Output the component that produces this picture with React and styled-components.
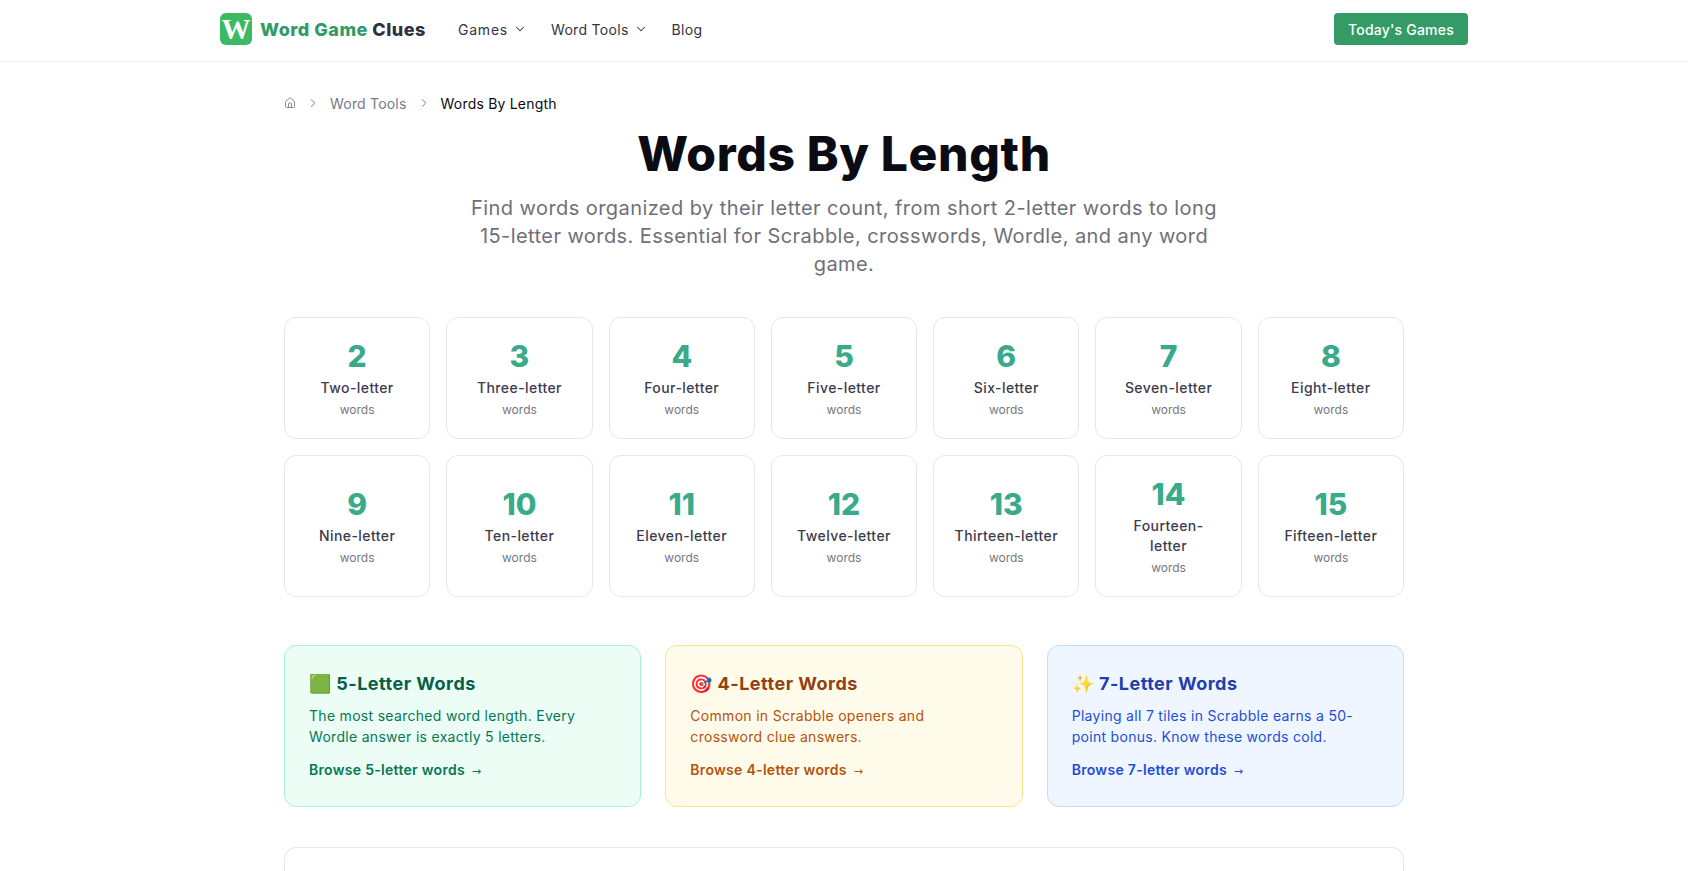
import React from "react";
import styled, { createGlobalStyle } from "styled-components";
import { ChevronDown, ChevronRight, House } from "lucide-react";

const GlobalStyle = createGlobalStyle`
  html, body {
    margin: 0;
    padding: 0;
    background: #fff;
    overflow: hidden;
  }
  body {
    font-family: Inter, "Open Sans", "Liberation Sans", sans-serif;
    color: #0a0a0f;
  }
  * {
    box-sizing: border-box;
  }
`;

const Page = styled.div`
  height: 871px;
  overflow: hidden;
  padding-right: 6px;
`;
const Header = styled.header`
  height: 62px;
  border-bottom: 1px solid #f0f0f2;
`;
const HeaderInner = styled.div`
  max-width: 1280px;
  height: 100%;
  margin: 0 auto;
  padding: 0 16px 3px;
  display: flex;
  align-items: center;
  gap: 32px;
`;
const Brand = styled.a`
  display: flex;
  align-items: center;
  gap: 8px;
`;
const LogoMark = styled.span`
  width: 32px;
  height: 32px;
  border-radius: 6px;
  background: #3cba63;
  color: #fff;
  display: flex;
  align-items: center;
  justify-content: center;
  font-family: "Liberation Serif", serif;
  font-weight: 700;
  font-size: 29px;
  line-height: 1;
`;
const BrandName = styled.span`
  font-size: 18px;
  font-weight: 800;
  letter-spacing: 0.5px;
  color: #2f2f40;
`;
const BrandAccent = styled.span`
  color: #2f9c68;
`;
const Nav = styled.nav`
  display: flex;
  align-items: center;
  gap: 24px;
`;
const NavItem = styled.a`
  display: flex;
  align-items: center;
  gap: 5px;
  font-size: 14px;
  letter-spacing: ${({ $tracking }) => $tracking || 0.3}px;
  color: #34343f;
`;
const TodayButton = styled.button`
  margin-left: auto;
  width: 134px;
  height: 32px;
  border: 0;
  border-radius: 4px;
  background: #349b67;
  color: #fff;
  font-family: inherit;
  font-size: 14px;
  font-weight: 500;
  letter-spacing: 0.2px;
`;
const Main = styled.main`
  max-width: 1152px;
  margin: 0 auto;
  padding: 31px 16px 0;
`;
const Breadcrumb = styled.div`
  display: flex;
  align-items: center;
  height: 20px;
  margin-bottom: 17px;
  font-size: 14px;
  color: #7a7a85;
`;
const Crumb = styled.span`
  letter-spacing: 0.2px;
  color: ${({ $current }) => ($current ? "#0a0a0f" : "#7a7a85")};
`;
const CrumbSep = styled.span`
  display: flex;
  width: 34px;
  justify-content: center;
  color: #6b6b75;
`;
const Title = styled.h1`
  margin: 0 0 16px;
  text-align: center;
  font-size: 48px;
  line-height: 48px;
  font-weight: 800;
  letter-spacing: 0.65px;
  color: #0b0b14;
`;
const Subtitle = styled.p`
  max-width: 768px;
  margin: 0 auto 39px;
  text-align: center;
  font-size: 20px;
  line-height: 28px;
  letter-spacing: 0.43px;
  color: #6f6f7a;
`;
const LengthGrid = styled.div`
  display: grid;
  grid-template-columns: repeat(7, 1fr);
  gap: 16px;
  margin-bottom: 48px;
`;
const LengthCard = styled.a`
  display: flex;
  flex-direction: column;
  align-items: center;
  justify-content: center;
  padding: 20px;
  text-align: center;
  border: 1px solid #e5e7eb;
  border-radius: 12px;
  background: #fff;
`;
const LengthNumber = styled.div`
  font-size: 30px;
  line-height: 36px;
  font-weight: 800;
  color: #3aab8a;
`;
const LengthLabel = styled.div`
  margin-top: 4px;
  font-size: 14px;
  line-height: 20px;
  font-weight: 500;
  letter-spacing: 0.42px;
  color: #3c3c4c;
`;
const LengthUnit = styled.div`
  margin-top: 4px;
  font-size: 12px;
  line-height: 16px;
  color: #77777f;
`;
const FeatureGrid = styled.div`
  display: grid;
  grid-template-columns: repeat(3, 1fr);
  gap: 24px;
  margin-bottom: 40px;
`;
const FeatureCard = styled.a`
  padding: 24px;
  border: 1px solid ${({ $tone }) => $tone.border};
  border-radius: 12px;
  background: ${({ $tone }) => $tone.bg};
`;
const FeatureTitle = styled.h3`
  margin: 0 0 7px;
  font-size: 18px;
  line-height: 28px;
  font-weight: 700;
  letter-spacing: 0.5px;
  color: ${({ $tone }) => $tone.title};
`;
const FeatureText = styled.p`
  margin: 0 0 13px;
  font-size: 14px;
  line-height: 21px;
  letter-spacing: 0.3px;
  color: ${({ $tone }) => $tone.text};
`;
const FeatureLink = styled.div`
  font-size: 14px;
  line-height: 20px;
  font-weight: 600;
  letter-spacing: 0.3px;
  color: ${({ $tone }) => $tone.text};
`;
const LinkArrow = styled.span`
  margin-left: 3px;
  font-family: "DejaVu Sans", sans-serif;
  font-size: 11px;
  font-weight: 400;
`;
const LowerCard = styled.section`
  height: 200px;
  border: 1px solid #e5e7eb;
  border-radius: 12px;
  background: #fff;
`;

const lengths = [
  [2, "Two-letter"],
  [3, "Three-letter"],
  [4, "Four-letter"],
  [5, "Five-letter"],
  [6, "Six-letter"],
  [7, "Seven-letter"],
  [8, "Eight-letter"],
  [9, "Nine-letter"],
  [10, "Ten-letter"],
  [11, "Eleven-letter"],
  [12, "Twelve-letter"],
  [13, "Thirteen-letter"],
  [14, "Fourteen-letter"],
  [15, "Fifteen-letter"],
];

const features = [
  {
    emoji: "🟩",
    title: "5-Letter Words",
    text: "The most searched word length. Every Wordle answer is exactly 5 letters.",
    link: "Browse 5-letter words",
    tone: { bg: "#ecfdf5", border: "#a7f3d0", title: "#065f46", text: "#047857" },
  },
  {
    emoji: "🎯",
    title: "4-Letter Words",
    text: "Common in Scrabble openers and crossword clue answers.",
    link: "Browse 4-letter words",
    tone: { bg: "#fffbeb", border: "#fde68a", title: "#92400e", text: "#b45309" },
  },
  {
    emoji: "✨",
    title: "7-Letter Words",
    text: "Playing all 7 tiles in Scrabble earns a 50-point bonus. Know these words cold.",
    link: "Browse 7-letter words",
    tone: { bg: "#eff6ff", border: "#bfdbfe", title: "#1e40af", text: "#1d4ed8" },
  },
];

const App = () => {
  return (
    <Page>
      <GlobalStyle />
      <Header>
        <HeaderInner>
          <Brand>
            <LogoMark>W</LogoMark>
            <BrandName>
              <BrandAccent>Word Game</BrandAccent> Clues
            </BrandName>
          </Brand>
          <Nav>
            <NavItem $tracking={0.8}>
              Games <ChevronDown size={14} strokeWidth={1.75} />
            </NavItem>
            <NavItem>
              Word Tools <ChevronDown size={14} strokeWidth={1.75} />
            </NavItem>
            <NavItem>Blog</NavItem>
          </Nav>
          <TodayButton>Today's Games</TodayButton>
        </HeaderInner>
      </Header>
      <Main>
        <Breadcrumb>
          <House size={12} strokeWidth={1.75} />
          <CrumbSep>
            <ChevronRight size={14} strokeWidth={1.5} />
          </CrumbSep>
          <Crumb>Word Tools</Crumb>
          <CrumbSep>
            <ChevronRight size={14} strokeWidth={1.5} />
          </CrumbSep>
          <Crumb $current>Words By Length</Crumb>
        </Breadcrumb>
        <Title>Words By Length</Title>
        <Subtitle>
          Find words organized by their letter count, from short 2-letter words to long
          15-letter words. Essential for Scrabble, crosswords, Wordle, and any word game.
        </Subtitle>
        <LengthGrid>
          {lengths.map(([count, label]) => (
            <LengthCard key={count}>
              <LengthNumber>{count}</LengthNumber>
              <LengthLabel>{label}</LengthLabel>
              <LengthUnit>words</LengthUnit>
            </LengthCard>
          ))}
        </LengthGrid>
        <FeatureGrid>
          {features.map((item) => (
            <FeatureCard key={item.title} $tone={item.tone}>
              <FeatureTitle $tone={item.tone}>
                {item.emoji} {item.title}
              </FeatureTitle>
              <FeatureText $tone={item.tone}>{item.text}</FeatureText>
              <FeatureLink $tone={item.tone}>
                {item.link} <LinkArrow>→</LinkArrow>
              </FeatureLink>
            </FeatureCard>
          ))}
        </FeatureGrid>
        <LowerCard />
      </Main>
    </Page>
  );
};

export default App;
